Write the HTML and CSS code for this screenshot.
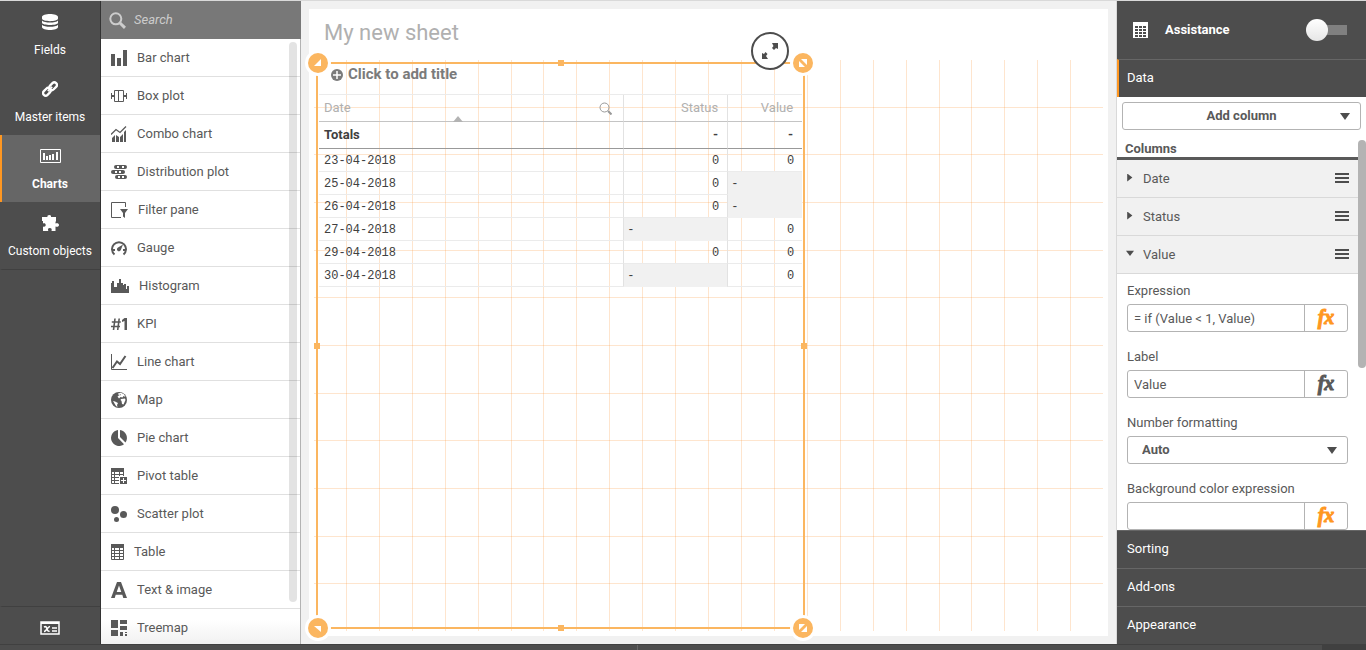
FILE: index.html
```
<!DOCTYPE html>
<html lang="en">
<head>
<meta charset="utf-8">
<title>My new sheet</title>
<link rel="stylesheet" href="styles.css">
</head>
<body>
<div class="workspace">
  <nav class="rail">
    <button class="rail-item"><svg width="16" height="16" viewBox="0 0 16 16"><path fill="#fff" d="M0 3C0-1 16-1 16 3v1.500C16 8 0 8 0 4.500zM0 6.500c2 2.700 14 2.700 16 0v2.200c0 3-16 3-16 0zM0 10.700c2 2.700 14 2.700 16 0V13c0 4-16 4-16 0z"/></svg><span>Fields</span></button>
    <button class="rail-item"><svg width="16" height="16" viewBox="0 0 16 16"><g fill="none" stroke="#fff" stroke-width="2.300"><rect x="6.800" y="2.600" width="8.600" height="5.200" rx="2.600" transform="rotate(-45 11.100 5.200)"/><rect x=".6" y="8.200" width="8.600" height="5.200" rx="2.600" transform="rotate(-45 4.900 10.800)"/></g><path d="M5.800 10.200l4.400-4.400" stroke="#fff" stroke-width="1.800"/></svg><span>Master items</span></button>
    <button class="rail-item active"><svg width="21" height="16" viewBox="0 0 21 16"><path fill="none" stroke="#fff" d="M.5 1.500h20v13H.5z"/><path fill="#fff" d="M3 5h2v7H3zM6 8h2v4H6zM9 7h2v5H9zM12 6h2v6h-2zM16 4h2v8h-2z"/></svg><span>Charts</span></button>
    <button class="rail-item"><svg width="17" height="16" viewBox="0 0 17 16"><path fill="#fff" d="M1 2h4.500C5 .8 6 0 7.300 0s2.200.9 1.600 2H14v4.500h-.5v2c1.500-.8 3.500-.3 3.500 1.500s-2 2.200-3.500 1.400V16H9.500c.6-1.800 0-3-1.700-3s-2.200 1.200-1.500 3H1v-4.500c1.600.6 2.700-.1 2.700-1.500S2.600 7.900 1 8.500V6H0V2z"/></svg><span>Custom objects</span></button>
    <button class="rail-item variables" aria-label="Variables"><svg width="20" height="14" viewBox="0 0 20 14"><path fill="none" stroke="#fff" stroke-width="1.500" d="M1 1h18v12H1z"/><path stroke="#fff" stroke-width="2" d="M1 2h18"/><path fill="none" stroke="#fff" stroke-width="1.600" d="M4 6c2-1 2.500 0 3 2s1.500 2.500 2.500 2M10 5.500C8 5.500 6 10.500 4 10.500M12 7h5M12 10h5"/></svg></button>
  </nav>

  <aside class="library">
    <label class="search"><svg width="17" height="17" viewBox="0 0 17 17"><circle cx="6.800" cy="6.800" r="5.500" fill="none" stroke="#ccc" stroke-width="2"/><path stroke="#ccc" stroke-width="3" d="M11 11l5 4.800"/></svg><input type="search" placeholder="Search" aria-label="Search"></label>
    <ul class="chart-list">
      <li><svg width="16" height="16" viewBox="0 0 16 16"><path d="M0 4h4v12H0zM6 8h4v8H6zM12 0h4v16h-4z"/></svg>Bar chart</li>
      <li><svg width="16" height="16" viewBox="0 0 16 16"><path fill="none" stroke="#595959" d="M3.500 2.500h9v11h-9zM7.500 2v12M.5 5v6M15.500 5v6"/><path d="M0 7h3v2H0zM13 7h3v2h-3z"/></svg>Box plot</li>
      <li><svg width="16" height="16" viewBox="0 0 16 16"><path d="M1 12l3-3v7H1zM5 9l3 2v5H5zM9 11l3-3v8H9zM13 6l2-2v12h-2z"/><path fill="none" stroke="#595959" stroke-width="1.300" d="M0 8.500l5-5 4 3L15 .5"/></svg>Combo chart</li>
      <li><svg width="16" height="16" viewBox="0 0 16 16"><rect x="3" y="1" width="13" height="4" rx="2"/><rect y="6" width="14" height="4" rx="2"/><rect x="4" y="11" width="12" height="4" rx="2"/><path fill="#fff" d="M6 2h2v2H6zM11 2h2v2h-2zM4 7h2v2H4zM8 7h2v2H8zM7 12h2v2H7zM11 12h2v2h-2z"/></svg>Distribution plot</li>
      <li><svg width="17" height="16" viewBox="0 0 17 16"><path fill="none" stroke="#595959" d="M14.500 5V.5H.5v15H10"/><path d="M9 7h8l-3 4v5l-2-1.500V11z"/></svg>Filter pane</li>
      <li><svg width="16" height="16" viewBox="0 0 16 16"><path fill="none" stroke="#595959" stroke-width="2" d="M3.500 14.500a7 7 0 1 1 9 0"/><path d="M12 4.500L9.800 10A2 2 0 1 1 7 7.500zM2 9h2v2H2zM12 9h2v2h-2z"/></svg>Gauge</li>
      <li><svg width="18" height="16" viewBox="0 0 18 16"><path d="M0 5h1V3h2v6h3V5h2V1h2v4h2v2h1V6h2v5h1V8h2v7H0z"/></svg>Histogram</li>
      <li><svg width="16" height="16" viewBox="0 0 16 16"><path fill="none" stroke="#595959" stroke-width="1.600" d="M4 2.500L2.500 14M8.200 2.500L6.700 14M.8 6h9M0 10.500h9"/><path d="M13.500 2H16v12h-2.500V5L11 6V4z"/></svg>KPI</li>
      <li><svg width="16" height="16" viewBox="0 0 16 16"><path fill="none" stroke="#595959" d="M.5 0v15.500H16"/><path fill="none" stroke="#595959" stroke-width="2" d="M1.500 14L6 7.500 9 10l5.500-8"/></svg>Line chart</li>
      <li><svg width="16" height="16" viewBox="0 0 16 16"><circle cx="8" cy="8" r="8"/><path fill="#fff" d="M7 1.500l3-.8 3 1.500 1.500 2.800-2-1-1 1.500L9.500 5 8 6.500 6.500 4.500l1.500-1zM10 7l4-.5L14.500 8l-2 4.500-1.500-.5-.5-3-1-1zM2 9l2 .5 3 1.500-1 2 .5 2L5 14z"/><path d="M9 2l1 1-1.500.5z"/></svg>Map</li>
      <li><svg width="16" height="16" viewBox="0 0 16 16"><path d="M7 0v8l6 6.200A8 8 0 1 1 7 0zM9 0a8 8 0 0 1 5.500 12.500L9 7z"/></svg>Pie chart</li>
      <li><svg width="16" height="16" viewBox="0 0 16 16"><path fill="none" stroke="#595959" d="M.5.5h12v15H.5zM0 6.500h13M0 9.500h10M0 12.500h10M3.500 2v13M8.500 2v13"/><path d="M0 0h13v4H0z"/><path fill="#fff" d="M8 8h8v8H8z"/><path d="M9 9h7v7H9z"/><path stroke="#fff" d="M12.500 10v5M10 12.500h5"/></svg>Pivot table</li>
      <li><svg width="16" height="16" viewBox="0 0 16 16"><circle cx="4" cy="4" r="4"/><circle cx="12.500" cy="8.500" r="3.500"/><circle cx="5.500" cy="13.500" r="2.500"/></svg>Scatter plot</li>
      <li><svg width="13" height="16" viewBox="0 0 13 16"><path fill="none" stroke="#595959" d="M.5.5h12v15H.5zM0 6.500h13M0 9.500h13M0 12.500h13M3.500 2v13M8.500 2v13"/><path d="M0 0h13v4H0z"/></svg>Table</li>
      <li><svg width="16" height="16" viewBox="0 0 16 16"><path fill-rule="evenodd" d="M6 0h4l6 16h-3.700l-1-3.200H4.700l-1 3.200H0zm2 3.500L5.700 10h4.600z"/></svg>Text &amp; image</li>
      <li><svg width="16" height="16" viewBox="0 0 16 16"><path d="M0 0h7v8H0zM9 0h7v4H9zM9 6h7v4H9zM0 10h7v6H0zM9 12h3v4H9zM14 12h2v1h-2zM14 14h2v2h-2z"/></svg>Treemap</li>
    </ul>
    <div class="scroll-thumb library-thumb"></div>
  </aside>

  <main class="stage">
    <section class="sheet">
      <h1>My new sheet</h1>
      <div class="canvas">
        <div class="grid-columns"><i></i><i></i><i></i><i></i><i></i><i></i><i></i><i></i><i></i><i></i><i></i><i></i><i></i><i></i><i></i><i></i><i></i><i></i><i></i><i></i><i></i><i></i><i></i><i></i></div>
        <div class="grid-rows"><i></i><i></i><i></i><i></i><i></i><i></i><i></i><i></i><i></i><i></i><i></i><i></i></div>
        <article class="object">
          <h2><svg width="12" height="12" viewBox="0 0 12 12"><circle cx="6" cy="6" r="6" fill="#7b7b7b"/><path stroke="#fff" stroke-width="1.500" d="M6 2v8M2 6h8"/></svg>Click to add title</h2>
          <table>
            <colgroup><col><col class="col-status"><col class="col-value"></colgroup>
            <thead>
              <tr><th><div class="head-cell">Date<svg width="13" height="13" viewBox="0 0 13 13"><circle cx="5.500" cy="5.500" r="4.500" fill="none" stroke="#999"/><path stroke="#999" stroke-width="2" d="M9 9l3.500 3.500"/></svg></div><span class="sort"></span></th><th>Status</th><th>Value</th></tr>
              <tr class="totals"><th>Totals</th><th>-</th><th>-</th></tr>
            </thead>
            <tbody>
              <tr><td>23-04-2018</td><td>0</td><td>0</td></tr>
              <tr><td>25-04-2018</td><td>0</td><td class="null">-</td></tr>
              <tr><td>26-04-2018</td><td>0</td><td class="null">-</td></tr>
              <tr><td>27-04-2018</td><td class="null">-</td><td>0</td></tr>
              <tr><td>29-04-2018</td><td>0</td><td>0</td></tr>
              <tr><td>30-04-2018</td><td class="null">-</td><td>0</td></tr>
            </tbody>
          </table>
          <b class="edge top"></b><b class="edge bottom"></b><b class="edge left"></b><b class="edge right"></b>
          <svg class="corner nw" viewBox="0 0 26 26"><circle cx="13" cy="13" r="13" fill="#fff"/><circle cx="13" cy="13" r="10" fill="#fbb660"/><path fill="#fff" d="M16 9v7H9z"/></svg>
          <svg class="corner ne" viewBox="0 0 26 26"><circle cx="13" cy="13" r="13" fill="#fff"/><circle cx="13" cy="13" r="10" fill="#fbb660"/><path fill="#fff" d="M11 9h6v6zM9 11l6 6H9z"/></svg>
          <svg class="corner sw" viewBox="0 0 26 26"><circle cx="13" cy="13" r="13" fill="#fff"/><circle cx="13" cy="13" r="10" fill="#fbb660"/><path fill="#fff" d="M9 11h7v6z"/></svg>
          <svg class="corner se" viewBox="0 0 26 26"><circle cx="13" cy="13" r="13" fill="#fff"/><circle cx="13" cy="13" r="10" fill="#fbb660"/><path fill="#fff" d="M9 9h6l-6 6zM17 11v6h-6z"/></svg>
          <button class="expand" aria-label="Full screen"><svg width="18" height="18" viewBox="0 0 18 18"><path fill="#4d4d4d" d="M11 1h6v6l-2-1-2 2-2-2 1.500-2zM1 11l2 1 1.500-2L6.500 12 5 14l2 3H1z"/></svg></button>
        </article>
      </div>
    </section>
  </main>

  <aside class="properties">
    <header class="assist">
      <svg width="15" height="16" viewBox="0 0 15 16"><path fill="#fff" d="M0 0h15v16H0z"/><path fill="#4d4d4d" d="M2 4h3v2H2zM6 4h3v2H6zM10 4h3v2h-3zM2 7h3v2H2zM6 7h3v2H6zM10 7h3v2h-3zM2 10h3v2H2zM6 10h3v2H6zM10 10h3v2h-3zM2 13h3v2H2zM6 13h3v2H6zM10 13h3v2h-3z"/></svg>
      <label for="assist-toggle">Assistance</label>
      <input id="assist-toggle" class="toggle" type="checkbox" role="switch">
    </header>
    <button class="section current">Data</button>
    <div class="data-panel">
      <button class="add-column"><span>Add column</span><i class="caret"></i></button>
      <h3>Columns</h3>
      <div class="column-list">
        <button class="column"><i class="arrow"></i><span>Date</span><i class="menu"></i></button>
        <button class="column"><i class="arrow"></i><span>Status</span><i class="menu"></i></button>
        <button class="column"><i class="arrow open"></i><span>Value</span><i class="menu"></i></button>
        <div class="fields">
          <div class="field"><label for="expr">Expression</label><div class="box"><input id="expr" type="text" value="= if (Value &lt; 1, Value)"><button class="fx on">fx</button></div></div>
          <div class="field"><label for="label">Label</label><div class="box"><input id="label" type="text" value="Value"><button class="fx">fx</button></div></div>
          <div class="field"><label for="format">Number formatting</label><div class="box"><select id="format"><option>Auto</option></select><i class="caret"></i></div></div>
          <div class="field"><label for="bg">Background color expression</label><div class="box"><input id="bg" type="text"><button class="fx on">fx</button></div></div>
        </div>
      </div>
      <div class="scroll-thumb properties-thumb"></div>
    </div>
    <button class="section">Sorting</button>
    <button class="section">Add-ons</button>
    <button class="section">Appearance</button>
  </aside>
</div>
<footer class="status-bar"><div></div><div></div><div></div></footer>
</body>
</html>
```
FILE: styles.css
```
* { box-sizing: border-box; }
body {
  margin: 0;
  height: 100vh;
  display: flex;
  flex-direction: column;
  overflow: hidden;
  border-top: 1px solid #d9d9d9;
  font: 13px/18px Roboto, "Liberation Sans", sans-serif;
  color: #595959;
}
button, input, select { font: inherit; color: inherit; margin: 0; padding: 0; border: 0; background: none; outline: 0; border-radius: 0; }
svg { flex: none; display: block; }
.workspace { flex: 1; min-height: 0; display: flex; }

.rail { width: 101px; flex: none; display: flex; flex-direction: column; background: #4d4d4d; border-right: 1px solid #333; }
.rail-item { height: 67px; padding: 13px 2px 9px 0; border-left: 2px solid transparent; display: flex; flex-direction: column; align-items: center; justify-content: space-between; color: #fff; white-space: nowrap; font-size: 12px; }
.rail-item.active { background: #666; border-left-color: #ff9721; font-weight: 700; }
.rail-item:nth-child(4) { height: 68px; border-bottom: 1px solid #404040; }
.rail-item.variables { height: 38px; margin-top: auto; padding: 4px 2px 0 0; justify-content: center; border-top: 1px solid #404040; }

.library { width: 200px; flex: none; display: flex; flex-direction: column; position: relative; border-right: 1px solid #b3b3b3; background: #fff; }
.search { height: 38px; flex: none; padding: 0 8px; display: flex; align-items: center; gap: 8px; background: #787878; margin-right: -1px; }
.search input { min-width: 0; flex: 1; color: #ccc; font-style: italic; }
.search input::placeholder { color: #ccc; opacity: 1; }
.chart-list { flex: 1; min-height: 0; overflow: hidden; margin: 0; padding: 0; list-style: none; background: linear-gradient(#fff 96%, #f1f1f1); }
.chart-list li { height: 38px; padding-left: 10px; display: flex; align-items: center; gap: 10px; border-bottom: 1px solid #e0e0e0; }
.chart-list li svg { fill: #595959; }
.scroll-thumb { position: absolute; width: 8px; border-radius: 4px; }
.library-thumb { right: 3px; top: 41px; bottom: 42px; background: rgba(0, 0, 0, .11); }

.stage { flex: 1; min-width: 0; padding: 8px; background: #f1f1f1; display: flex; }
.sheet { flex: 1; min-width: 0; padding: 0 5px 5px; background: #fff; display: flex; flex-direction: column; }
h1 { margin: 0; height: 51px; padding: 10px 10px 0; font-size: 22px; line-height: 28px; font-weight: 400; color: #b0b0b0; }
.canvas { flex: 1; min-height: 0; display: grid; grid-template: minmax(0, 1fr) / minmax(0, 1fr); }
.canvas > * { grid-area: 1 / 1; }
.grid-columns { display: flex; }
.grid-rows { display: flex; flex-direction: column; }
.grid-columns i, .grid-rows i { flex: 1; border: 0 solid rgba(251, 152, 60, .25); }
.grid-columns i + i { border-left-width: 1px; }
.grid-rows i + i { border-top-width: 1px; }

.object { position: relative; width: calc(62.5% - 4px); margin: 2px; padding: 3px; z-index: 1; }
h2 { margin: 0; height: 29px; padding: 0 12px; display: flex; align-items: flex-start; gap: 5px; font-size: 15px; line-height: 18px; color: #7b7b7b; }
h2 svg { margin-top: 4px; }
table { width: 100%; border-collapse: separate; border-spacing: 0; table-layout: fixed; border-top: 1px solid #ebebeb; }
.col-status { width: 104px; }
.col-value { width: 75px; }
th, td { height: 23px; padding: 0 8px 0 5px; text-align: right; border-bottom: 1px solid #ebebeb; border-left: 1px solid #e2e2e2; line-height: 22px; }
th:first-child, td:first-child { text-align: left; padding-left: 5px; border-left: 0; }
th { position: relative; height: 27px; padding-right: 9px; font-weight: 400; color: #b0b0b0; border-bottom-color: #c4c4c4; line-height: 26px; }
.totals th { font-weight: 700; color: #404040; border-bottom-color: #999; }
td { padding: 2px 8px 0 3px; font-family: "Liberation Mono", monospace; font-size: 12px; line-height: 20px; color: #404040; }
td.null { text-align: left; background: #f1f1f1; border-bottom-color: #f1f1f1; }
.head-cell { display: flex; align-items: center; justify-content: space-between; padding-right: 2px; }
.sort { position: absolute; left: 134px; bottom: -1px; border: solid transparent; border-width: 0 5px 6px; border-bottom-color: #b3b3b3; }

.edge { position: absolute; background: #fbb660; }
.edge.top, .edge.bottom { left: 0; right: 0; height: 2px; }
.edge.left, .edge.right { top: 0; bottom: 0; width: 2px; }
.edge.top { top: 0; }
.edge.bottom { bottom: 0; }
.edge.left { left: 0; }
.edge.right { right: 0; }
.edge::after { content: ""; position: absolute; width: 6px; height: 6px; background: #fbb660; left: 50%; top: 50%; transform: translate(-50%, -50%); }
.corner { position: absolute; width: 26px; height: 26px; }
.corner.nw, .corner.sw { left: -11px; }
.corner.ne, .corner.se { right: -11px; }
.corner.nw, .corner.ne { top: -12px; }
.corner.sw, .corner.se { bottom: -12px; }
.expand { position: absolute; right: 16px; top: -30px; width: 38px; height: 38px; border: 2px solid #4d4d4d; border-radius: 50%; background: #fff; display: grid; place-items: center; }

.properties { width: 250px; flex: none; display: flex; flex-direction: column; border-left: 1px solid #d9d9d9; background: #fff; }
.assist { height: 58px; flex: none; padding: 0 19px 0 16px; display: flex; align-items: center; background: #4d4d4d; color: #fff; font-weight: 700; }
.assist label { flex: 1; margin-left: 17px; }
.toggle { appearance: none; width: 41px; height: 22px; display: flex; align-items: center; background: linear-gradient(#808080, #808080) right center / 30px 10px no-repeat; border-radius: 5px; }
.toggle::before { content: ""; width: 22px; height: 22px; border-radius: 50%; background: linear-gradient(#fff, #e6e6e6); }
.section { height: 38px; flex: none; padding: 0 10px 2px; text-align: left; color: #fff; background: #4d4d4d; border-top: 1px solid #666; }
.section.current { border-left: 2px solid #ff9721; padding-left: 8px; }
.data-panel { flex: 1; min-height: 0; position: relative; display: flex; flex-direction: column; }
.add-column { flex: none; height: 28px; margin: 5px 5px 0; padding: 0 10px 0 20px; display: flex; align-items: center; border: 1px solid #b3b3b3; border-radius: 3px; font-weight: 700; }
.add-column span { flex: 1; }
.caret { border: solid transparent; border-width: 7px 5px 0; border-top-color: #4d4d4d; }
h3 { flex: none; margin: 0 8px 0 0; height: 30px; padding: 10px 8px 0; border-bottom: 3px solid #595959; font-size: 13px; line-height: 18px; }
.column-list { flex: 1; min-height: 0; overflow: hidden; margin-right: 8px; }
.column { width: 100%; height: 38px; padding: 0 9px; display: flex; align-items: center; background: #f1f1f1; border-bottom: 1px solid #d9d9d9; text-align: left; }
.column span { flex: 1; margin-left: 9px; }
.arrow { width: 8px; height: 8px; background: #4d4d4d; clip-path: polygon(15% 0, 80% 50%, 15% 100%); }
.arrow.open { clip-path: polygon(0 15%, 100% 15%, 50% 80%); }
.menu { width: 14px; height: 10px; background: linear-gradient(#4d4d4d 2px, transparent 2px 4px, #4d4d4d 4px 6px, transparent 6px 8px, #4d4d4d 8px); }
.arrow, .menu { margin-bottom: 2px; }
.fields { padding: 8px 10px 0; display: grid; grid-template-columns: minmax(0, 1fr); gap: 16px; }
.field { display: grid; grid-template-columns: minmax(0, 1fr); gap: 4px; }
.box { height: 28px; display: flex; align-items: center; border: 1px solid #b3b3b3; border-radius: 3px; }
.box input { flex: 1; min-width: 0; padding: 0 6px; height: 100%; }
.box select { flex: 1; appearance: none; padding: 0 14px; font-weight: 700; }
.box .caret { margin-right: 10px; }
.fx { flex: none; width: 43px; height: 100%; padding-bottom: 2px; border-left: 1px solid #b3b3b3; font: italic 700 20px/20px "Liberation Serif", serif; -webkit-text-stroke: 1px currentColor; }
.fx.on { color: #ff9721; }
.properties-thumb { right: 0; top: 43px; height: 228px; background: #b3b3b3; }

.status-bar { flex: none; height: 6px; display: flex; background: #4d4d4d; border-top: 1px solid #404040; }
.status-bar div:nth-child(1) { flex: 637; border-right: 1px solid #666; }
.status-bar div:nth-child(2) { flex: 685; }
.status-bar div:nth-child(3) { flex: 44; background: #404040; }
```
